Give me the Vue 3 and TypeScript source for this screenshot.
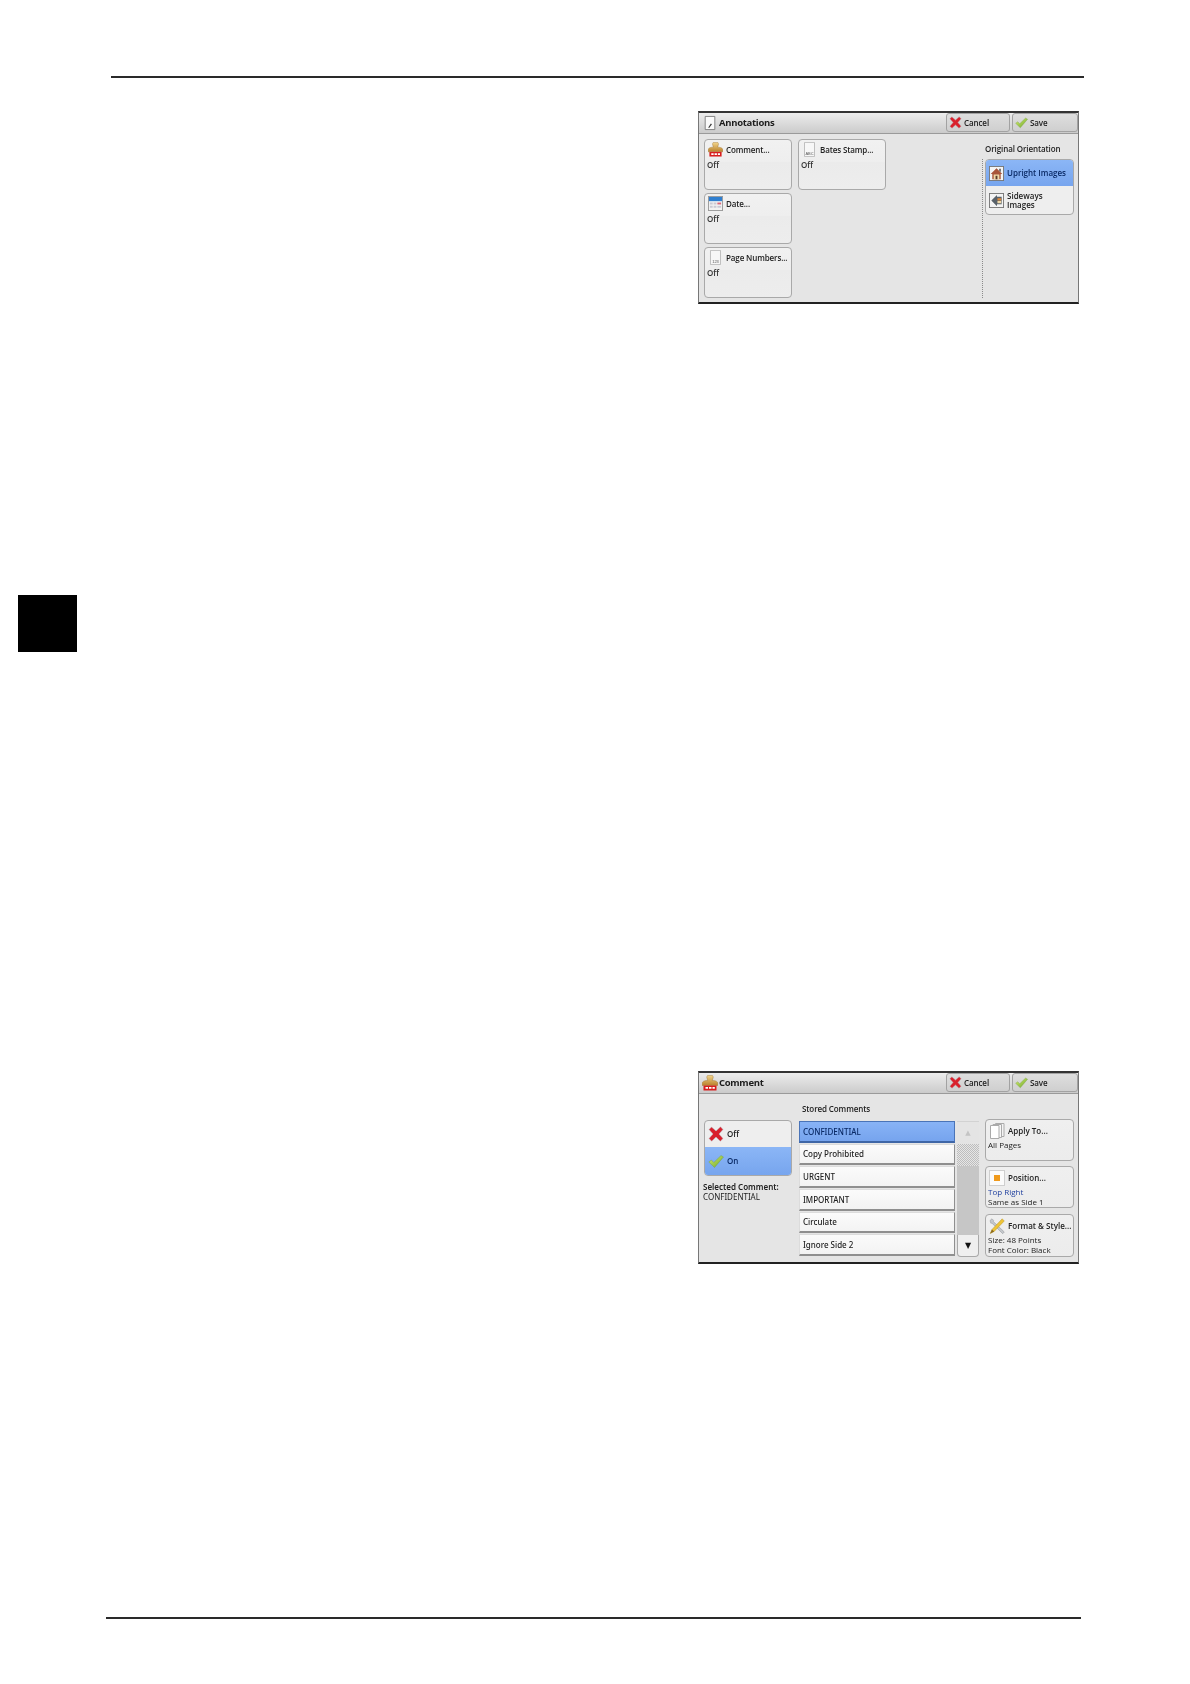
<script setup lang="ts">
const list = ['CONFIDENTIAL', 'Copy Prohibited', 'URGENT', 'IMPORTANT', 'Circulate', 'Ignore Side 2']
</script>

<template>
  <div class="page">
    <svg class="defs" aria-hidden="true">
      <defs>
        <linearGradient id="gold" x1="0" y1="0" x2="0" y2="1">
          <stop offset="0" stop-color="#f2d48a" />
          <stop offset="1" stop-color="#b9812c" />
        </linearGradient>
        <linearGradient id="greenFill" x1="0" y1="0" x2="1" y2="1">
          <stop offset="0" stop-color="#d8ee70" />
          <stop offset="1" stop-color="#6aa52a" />
        </linearGradient>
        <symbol id="i-stamp" viewBox="0 0 16 16">
          <path d="M5.500 .5h5l.8 1.500-1 3.500h1.200c2.500.3 4.300 1.200 4.300 2.700v2.300H.2V8.200c0-1.500 1.800-2.400 4.300-2.700h1.200l-1-3.500z" fill="url(#gold)" stroke="#9a6e2a" stroke-width=".4" />
          <rect x="1.500" y="10.500" width="13" height="5" fill="#d81e1e" />
          <path d="M3.500 12h2.500v1.800H3.500zM7 12h2.500v1.800H7zM10.500 12h2.300v1.800h-2.300z" fill="#fff" />
        </symbol>
        <symbol id="i-note" viewBox="0 0 16 16">
          <path d="M2.500 .5h11v15h-11z" fill="#fafafa" stroke="#777" />
          <path d="M6 13l3-4.500 1.200.9-3.200 4.200z" fill="#333" />
        </symbol>
        <symbol id="i-abc" viewBox="0 0 16 18">
          <path d="M2 .5h12v17H2z" fill="#f7f7f7" stroke="#b5b5b5" />
          <text x="8" y="16" font-size="4.800" text-anchor="middle" font-family="'Liberation Sans', sans-serif" fill="#555">ABC</text>
        </symbol>
        <symbol id="i-123" viewBox="0 0 16 18">
          <path d="M2 .5h12v17H2z" fill="#f7f7f7" stroke="#b5b5b5" />
          <text x="8" y="16" font-size="4.800" text-anchor="middle" font-family="'Liberation Sans', sans-serif" fill="#555">123</text>
        </symbol>
        <symbol id="i-cal" viewBox="0 0 16 16">
          <rect x=".5" y=".5" width="15" height="15" fill="#f2f2f2" stroke="#999" />
          <rect x="1" y="1" width="14" height="4.500" fill="#2f7fd0" />
          <path d="M2 7h3v2H2zM6 7h3v2H6zM2 10.500h3v2H2zM6 10.500h3v2H6z" fill="#c9c9d4" />
          <path d="M10 7h4v2h-4z" fill="#d9667a" />
          <path d="M10 10.500h4v2h-4z" fill="#c9c9d4" />
        </symbol>
        <symbol id="i-x" viewBox="0 0 16 16">
          <path d="M1 3.500L3.500 1 8 5 12.500 .8 15 3.500 11 8l4 4.500-2.700 2.700L8 11l-4.300 4.200L1 12.500 5 8z" fill="#d9202c" stroke="#b5c0c8" stroke-width=".5" />
        </symbol>
        <symbol id="i-check" viewBox="0 0 16 16">
          <path d="M.8 9l2.600-2 2.400 2.500L13 2.500l2.500 1.500-9 10.500z" fill="url(#greenFill)" stroke="#6f9a3c" stroke-width=".4" />
        </symbol>
        <symbol id="i-house" viewBox="0 0 16 16">
          <rect x=".5" y=".5" width="15" height="15" fill="#f4f4f4" stroke="#777" />
          <path d="M8 2.500L1.800 8.500h1.700V14h9V8.500h1.700z" fill="#a8553a" />
          <path d="M5 9h6v5H5z" fill="#f0d9a8" />
          <path d="M7 10.500h2V14H7z" fill="#5a3a2a" />
          <path d="M11 3h1.500v3.500L11 5.200z" fill="#444" />
        </symbol>
        <symbol id="i-side" viewBox="0 0 16 16">
          <rect x=".5" y=".5" width="15" height="15" fill="#f4f4f4" stroke="#777" />
          <path d="M2.500 8L8.500 2v2h5v8h-5v2z" fill="#59626a" />
          <path d="M9 5.500h4V8H9z" fill="#e08a3a" />
          <path d="M9 8.500h4v2.500H9z" fill="#f0d9a8" />
        </symbol>
        <symbol id="i-pages" viewBox="0 0 16 16">
          <path d="M6.500 .5h8.500v13H6.500z" fill="#f4f4f4" stroke="#aaa" />
          <path d="M4 1.500h8.500v13H4z" fill="#f8f8f8" stroke="#aaa" />
          <path d="M1.500 2.500H10v13H1.500z" fill="#fff" stroke="#aaa" />
        </symbol>
        <symbol id="i-pos" viewBox="0 0 16 16">
          <rect x=".5" y=".5" width="15" height="15" fill="#fbfbfb" stroke="#cfcfcf" />
          <rect x="5" y="5" width="6" height="6" fill="#f09a1c" />
        </symbol>
        <symbol id="i-tools" viewBox="0 0 16 16">
          <path d="M1 2.500L3 .8l1.500 1.500-.2 1.200 11 10.500-1.600 1.700L3 5.200l-1.200 0z" fill="#c4c8cc" stroke="#7d8286" stroke-width=".4" />
          <path d="M13.200.8L15.300 3 5.200 13.400l-4 2.200L3 11.400z" fill="#eec437" stroke="#a8861f" stroke-width=".4" />
          <path d="M1.200 15.600L3 11.400l2.200 2z" fill="#8a6a20" />
        </symbol>
      </defs>
    </svg>

    <div class="rule rule-top"></div>

    <section class="panel panel-a">
      <header class="head">
        <svg class="ic head-ic"><use href="#i-note" /></svg>
        <span class="title">Annotations</span>
        <div class="actions">
          <button class="act act-c"><svg class="ic"><use href="#i-x" /></svg>Cancel</button>
          <button class="act act-s"><svg class="ic"><use href="#i-check" /></svg>Save</button>
        </div>
      </header>
      <div class="body-a">
        <div class="features">
          <div class="fbtn">
            <div class="fline"><svg class="ic"><use href="#i-stamp" /></svg><b>Comment...</b></div>
            <span class="off">Off</span>
          </div>
          <div class="fbtn">
            <div class="fline"><svg class="ic"><use href="#i-abc" /></svg><b>Bates Stamp...</b></div>
            <span class="off">Off</span>
          </div>
          <div class="fbtn">
            <div class="fline"><svg class="ic"><use href="#i-cal" /></svg><b>Date...</b></div>
            <span class="off">Off</span>
          </div>
          <div class="blank"></div>
          <div class="fbtn">
            <div class="fline"><svg class="ic"><use href="#i-123" /></svg><b>Page Numbers...</b></div>
            <span class="off">Off</span>
          </div>
        </div>
        <div class="orient">
          <div class="orient-label">Original Orientation</div>
          <div class="orient-box">
            <div class="seg">
              <div class="seg-item sel seg-1"><svg class="ic"><use href="#i-house" /></svg><b>Upright Images</b></div>
              <div class="seg-item seg-2"><svg class="ic"><use href="#i-side" /></svg><b>Sideways<br />Images</b></div>
            </div>
          </div>
        </div>
      </div>
    </section>

    <div class="tab"></div>

    <section class="panel panel-b">
      <header class="head">
        <svg class="ic head-ic stamp-head"><use href="#i-stamp" /></svg>
        <span class="title">Comment</span>
        <div class="actions">
          <button class="act act-c"><svg class="ic"><use href="#i-x" /></svg>Cancel</button>
          <button class="act act-s"><svg class="ic"><use href="#i-check" /></svg>Save</button>
        </div>
      </header>
      <div class="body-b">
        <div class="left">
          <div class="toggle">
            <div class="tog tog-off"><svg class="ic ic-big"><use href="#i-x" /></svg><b>Off</b></div>
            <div class="tog tog-on sel"><svg class="ic ic-big"><use href="#i-check" /></svg><b>On</b></div>
          </div>
          <p class="selected"><b>Selected Comment:</b><br />CONFIDENTIAL</p>
        </div>
        <div class="mid">
          <div class="stored">Stored Comments</div>
          <div class="list-wrap">
            <div class="list">
              <div v-for="(item, i) in list" :key="item" class="row" :class="{ sel: i === 0 }">{{ item }}</div>
            </div>
            <div class="scroll">
              <div class="sc-up">▲</div>
              <div class="sc-thumb"></div>
              <div class="sc-track"></div>
              <div class="sc-down">▼</div>
            </div>
          </div>
        </div>
        <div class="right">
          <div class="rbtn rbtn-a">
            <div class="rline"><svg class="ic ic-big"><use href="#i-pages" /></svg><b>Apply To...</b></div>
            <span>All Pages</span>
          </div>
          <div class="rbtn rbtn-b">
            <div class="rline"><svg class="ic ic-big"><use href="#i-pos" /></svg><b>Position...</b></div>
            <span class="blue">Top Right</span>
            <span>Same as Side 1</span>
          </div>
          <div class="rbtn rbtn-c">
            <div class="rline"><svg class="ic ic-big"><use href="#i-tools" /></svg><b>Format &amp; Style...</b></div>
            <span>Size: 48 Points</span>
            <span>Font Color: Black</span>
          </div>
        </div>
      </div>
    </section>

    <div class="rule rule-bottom"></div>
  </div>
</template>

<style scoped>
.page {
  position: relative;
  width: 1190px;
  height: 1684px;
  background: #fff;
  overflow: hidden;
  font-family: "Open Sans", "Noto Sans", sans-serif;
  font-size: 8px;
  line-height: 9.500px;
  color: #222;
  padding-top: 76px;
  box-sizing: border-box;
}
.defs {
  position: absolute;
  width: 0;
  height: 0;
}
.rule {
  height: 2px;
  background: #2a2a2a;
}
.rule-top {
  margin-left: 111px;
  width: 973px;
}
.rule-bottom {
  margin: 353px 0 0 106px;
  width: 975px;
}
.tab {
  width: 59px;
  height: 57px;
  margin: 291px 0 0 18px;
  background: #000;
}
.panel {
  box-sizing: border-box;
  width: 381px;
  height: 193px;
  margin-left: 698px;
  background: #e5e5e5;
  border: 1px solid #777;
  border-top: 2px solid #333;
  border-bottom: 2px solid #222;
  display: flex;
  flex-direction: column;
  filter: blur(0.3px);
}
.panel-a {
  margin-top: 33px;
}
.panel-b {
  margin-top: 419px;
}
.head {
  box-sizing: border-box;
  height: 21px;
  flex: none;
  display: flex;
  align-items: center;
  background: linear-gradient(#ececec, #cbcbcb);
  border-bottom: 1px solid #9a9a9a;
  padding-left: 4px;
}
.ic {
  width: 15px;
  height: 15px;
  flex: none;
}
.ic-big {
  width: 16px;
  height: 16px;
}
.head-ic {
  width: 14px;
  height: 16px;
  margin-right: 2px;
}
.stamp-head {
  width: 16px;
  height: 16px;
  margin: 0 1px 0 -1px;
}
.title {
  font-size: 9.500px;
  font-weight: 700;
  color: #1c1c1c;
  letter-spacing: -0.3px;
}
.actions {
  margin-left: auto;
  display: flex;
  align-self: flex-start;
  gap: 2px;
}
.act {
  box-sizing: border-box;
  height: 19px;
  border: 1px solid #a2a2a2;
  border-radius: 3px;
  background: linear-gradient(#dedede, #cfcfcf);
  display: flex;
  align-items: center;
  font: 600 8px "Open Sans", sans-serif;
  letter-spacing: -0.1px;
  color: #222;
  padding: 0 0 0 2px;
  gap: 2px;
}
.act .ic {
  width: 13px;
  height: 13px;
}
.act-c {
  width: 64px;
}
.act-s {
  width: 66px;
}
.body-a {
  flex: 1;
  display: flex;
  padding: 5px 4px 4px 5px;
}
.features {
  display: grid;
  grid-template-columns: 88px 88px;
  grid-auto-rows: 51px;
  column-gap: 6px;
  row-gap: 3px;
}
.fbtn {
  box-sizing: border-box;
  border: 1px solid #a9a9a9;
  border-radius: 4px;
  background: linear-gradient(#f1f1f1 0, #eeeeee 45%, #ebebeb 45%, #ededed 100%);
  padding: 2px 2px;
}
.fline {
  display: flex;
  align-items: center;
  gap: 3px;
  height: 15px;
  padding-left: 1px;
  white-space: nowrap;
  letter-spacing: -0.12px;
}
.fline b,
.seg-item b,
.rline b,
.tog b,
.selected b {
  font-weight: 600;
}
.off {
  display: block;
  margin-top: 3px;
  font-weight: 600;
  color: #333;
}
.orient {
  margin-left: auto;
  width: 92px;
  display: flex;
  flex-direction: column;
}
.orient-label {
  height: 20px;
  padding: 5px 0 0 3px;
  box-sizing: border-box;
  font-weight: 600;
  letter-spacing: -0.1px;
  white-space: nowrap;
}
.orient-box {
  flex: 1;
  border-left: 1px dotted #8a8a8a;
  padding-left: 2px;
}
.seg {
  width: 89px;
  border: 1px solid #a9a9a9;
  border-radius: 4px;
  overflow: hidden;
  box-sizing: border-box;
  background: #eee;
}
.seg-item {
  display: flex;
  align-items: center;
  gap: 3px;
  padding-left: 3px;
  box-sizing: border-box;
  white-space: nowrap;
}
.seg-1 {
  height: 26px;
}
.seg-2 {
  height: 28px;
}
.sel {
  background: linear-gradient(#8bb6f6, #77a5ee);
  color: #0a2a66;
}
.body-b {
  flex: 1;
  display: flex;
  padding: 0 4px 0 5px;
}
.left {
  width: 88px;
  padding-top: 26px;
}
.toggle {
  border: 1px solid #a9a9a9;
  border-radius: 4px;
  overflow: hidden;
  background: #eee;
}
.tog {
  display: flex;
  align-items: center;
  gap: 3px;
  padding-left: 3px;
  box-sizing: border-box;
}
.tog-off {
  height: 26px;
}
.tog-on {
  height: 28px;
}
.selected {
  margin: 6px 0 0 -1px;
  white-space: nowrap;
  color: #222;
  font-family: "Noto Sans", "Open Sans", sans-serif;
}
.mid {
  margin-left: 7px;
  width: 180px;
}
.stored {
  height: 27px;
  padding: 10px 0 0 3px;
  box-sizing: border-box;
  font-weight: 600;
  letter-spacing: -0.1px;
}
.list-wrap {
  display: flex;
  gap: 2px;
}
.list {
  width: 156px;
  display: flex;
  flex-direction: column;
  gap: 1px;
}
.row {
  box-sizing: border-box;
  height: 21.700px;
  display: flex;
  align-items: center;
  padding-left: 3px;
  background: linear-gradient(#fbfbfb, #f3f3f3);
  border: 1px solid #dcdcdc;
  border-bottom: 2px solid #8f8f8f;
  border-right: 1px solid #8f8f8f;
  font-weight: 500;
  font-family: "Noto Sans", "Open Sans", sans-serif;
}
.row.sel {
  background: linear-gradient(#88b3f6, #76a4ee);
  border: 1px solid #4a74b8;
  border-bottom: 2px solid #3f66a6;
  color: #0a2a66;
}
.scroll {
  width: 22px;
  display: flex;
  flex-direction: column;
  height: 136px;
  border-radius: 0 0 4px 4px;
}
.sc-up {
  height: 23px;
  display: flex;
  align-items: center;
  justify-content: center;
  background: #e4e4e4;
  color: #c4c4c4;
  font: 7px "DejaVu Sans", sans-serif;
  border-top: 1px solid #d2d2d2;
  box-sizing: border-box;
}
.sc-thumb {
  height: 22px;
  background: repeating-conic-gradient(#bdbdbd 0 25%, #e6e6e6 0 50%) 0 0 / 2px 2px;
}
.sc-track {
  flex: 1;
  background: #c6c6c6;
}
.sc-down {
  height: 22px;
  display: flex;
  align-items: center;
  justify-content: center;
  box-sizing: border-box;
  background: #efefef;
  border: 1px solid #a9a9a9;
  border-top: none;
  border-radius: 0 0 4px 4px;
  color: #111;
  font: 8px "DejaVu Sans", sans-serif;
}
.right {
  margin-left: auto;
  width: 89px;
  padding-top: 25px;
  display: flex;
  flex-direction: column;
  gap: 5px;
}
.rbtn {
  box-sizing: border-box;
  border: 1px solid #a9a9a9;
  border-radius: 4px;
  background: linear-gradient(#efefef, #ececec);
  padding: 2px 2px;
  display: flex;
  flex-direction: column;
  font-weight: 500;
  white-space: nowrap;
  height: 42px;
}
.rbtn-c {
  height: 43px;
  margin-top: 1px;
}
.rline {
  display: flex;
  align-items: center;
  gap: 3px;
  height: 17px;
  flex: none;
  padding-left: 1px;
  margin-bottom: 1px;
}
.blue {
  color: #1f3f9e;
}
</style>
